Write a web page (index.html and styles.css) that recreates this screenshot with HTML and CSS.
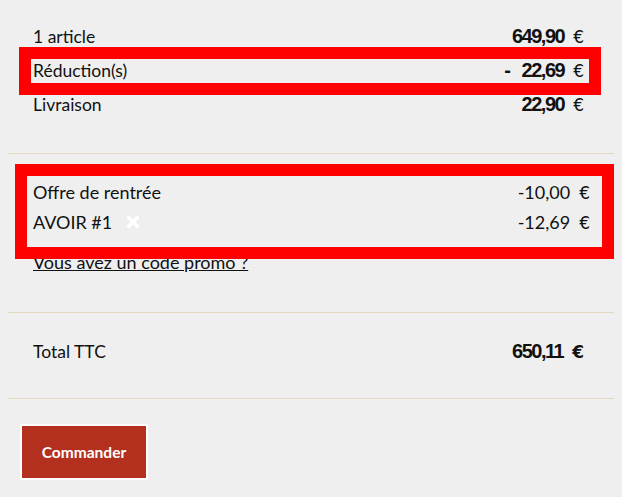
FILE: index.html
```html
<!DOCTYPE html>
<html lang="fr">
<head>
<meta charset="utf-8">
<title>Récapitulatif</title>
<link rel="stylesheet" href="styles.css">
</head>
<body>
<div class="cart">
  <div class="block lines">
    <div class="row"><span class="label">1 article</span><span class="amount"><b class="num">649,90</b><span class="cur">€</span></span></div>
    <div class="row"><span class="label">Réduction(s)</span><span class="amount"><b class="num">-&nbsp;&nbsp; 22,69</b><span class="cur">€</span></span></div>
    <div class="row"><span class="label">Livraison</span><span class="amount"><b class="num">22,90</b><span class="cur">€</span></span></div>
    <div class="mark mark-one"></div>
  </div>
  <div class="block promo">
    <div class="prow"><span class="label">Offre de rentrée</span><span class="pamount">-10,00<span class="cur">€</span></span></div>
    <div class="prow"><span class="label">AVOIR #1 <svg class="remove" width="14" height="14" viewBox="0 0 14 14"><path d="M2.5 2.5 L11.5 11.5 M11.5 2.5 L2.5 11.5" stroke="#ffffff" stroke-width="3.4" stroke-linecap="round"/></svg></span><span class="pamount">-12,69<span class="cur">€</span></span></div>
    <a class="promo-link" href="#">Vous avez un code promo ?</a>
    <div class="mark mark-two"></div>
  </div>
  <div class="block total">
    <div class="trow"><span class="label">Total TTC</span><span class="amount"><b class="num">650,11</b><b class="cur bold">€</b></span></div>
  </div>
  <div class="actions">
    <button class="order" type="button">Commander</button>
  </div>
</div>
</body>
</html>
```
FILE: styles.css
```css
html, body {
  margin: 0;
  padding: 0;
  background: #efefef;
}
body {
  font-family: "Lato", "Noto Sans", sans-serif;
  color: #111;
  font-size: 18px;
}
.cart {
  padding: 0 8px;
}
.block {
  position: relative;
  border-bottom: 1px solid #e2d8bf;
}
.lines {
  padding: 19px 30px 32px 25px;
}
.row, .trow {
  display: flex;
  justify-content: space-between;
  align-items: center;
  height: 34px;
}
.trow { height: 30px; }
.label {
  font-size: 17.5px;
  display: flex;
  align-items: center;
}
.amount {
  display: flex;
  align-items: baseline;
}
.num {
  font-family: "Liberation Sans", Arial, sans-serif;
  font-weight: bold;
  font-size: 20px;
  letter-spacing: -1.5px;
}
.cur {
  font-family: "DejaVu Sans", sans-serif;
  font-size: 17px;
  font-weight: normal;
  margin-left: 9px;
}
.cur.bold { font-weight: bold; }
.promo {
  padding: 23px 24px 38px 25px;
}
.prow {
  display: flex;
  justify-content: space-between;
  align-items: center;
  height: 30px;
}
.promo .label { font-size: 18px; }
.pamount {
  font-size: 18px;
  display: flex;
  align-items: baseline;
}
.remove {
  margin-left: 14px;
}
.promo-link {
  display: block;
  margin-top: 13px;
  line-height: 24px;
  color: #111;
  text-decoration: underline;
  font-size: 18px;
}
.total {
  padding: 23px 30px 32px 25px;
}
.actions {
  padding: 25px 0 0 12px;
}
.order {
  width: 128px;
  height: 56px;
  border: 2px solid #ffffff;
  background: #b3301f;
  color: #fff;
  font-family: "Lato", "Noto Sans", sans-serif;
  font-weight: bold;
  font-size: 15.5px;
  padding: 0;
}
.mark {
  position: absolute;
  box-sizing: border-box;
  border: 12px solid #ff0000;
  pointer-events: none;
}
.mark-one {
  left: 11px;
  top: 47px;
  width: 582px;
  height: 48px;
}
.mark-two {
  left: 7px;
  top: 10px;
  width: 599px;
  height: 95px;
}
```
